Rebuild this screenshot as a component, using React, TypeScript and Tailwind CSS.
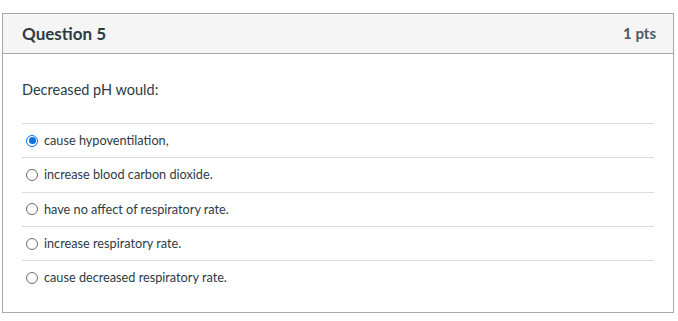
import React from "react";

const options = [
  { text: "cause hypoventilation,", checked: true },
  { text: "increase blood carbon dioxide.", checked: false },
  { text: "have no affect of respiratory rate.", checked: false },
  { text: "increase respiratory rate.", checked: false },
  { text: "cause decreased respiratory rate.", checked: false },
];

export default function App() {
  return (
    <div className="w-[678px] h-[321px] bg-white pt-[13px] pl-[2px]" style={{ fontFamily: "Lato, 'Open Sans', sans-serif" }}>
      <div className="w-[672px] h-[300px] border border-[#a8a8a8] text-[#2d3b45]">
        <div className="h-[40px] bg-[#f5f5f5] border-b border-[#a8a8a8] flex items-center justify-between pl-[19px] pr-[17px]">
          <span className="text-[17px] font-bold">Question 5</span>
          <span className="text-[15px] font-bold text-[#4a5a66]">1 pts</span>
        </div>
        <div className="px-[19px] pt-[26px]">
          <div className="text-[14.5px] leading-[20px]">Decreased pH would:</div>
          <div className="mt-[23px]">
            {options.map((o, i) => (
              <div
                key={i}
                className="h-[34.3px] border-t border-[#dcdcdc] flex items-center pl-[4px] gap-[6px] text-[12.7px]"
              >
                {o.checked ? (
                  <span className="w-[12px] h-[12px] rounded-full border border-[#0770e3] bg-white flex items-center justify-center">
                    <span className="w-[7px] h-[7px] rounded-full bg-[#0770e3]" />
                  </span>
                ) : (
                  <span className="w-[12px] h-[12px] rounded-full border border-[#6b6b6b] bg-white" />
                )}
                <span>{o.text}</span>
              </div>
            ))}
          </div>
        </div>
      </div>
    </div>
  );
}
